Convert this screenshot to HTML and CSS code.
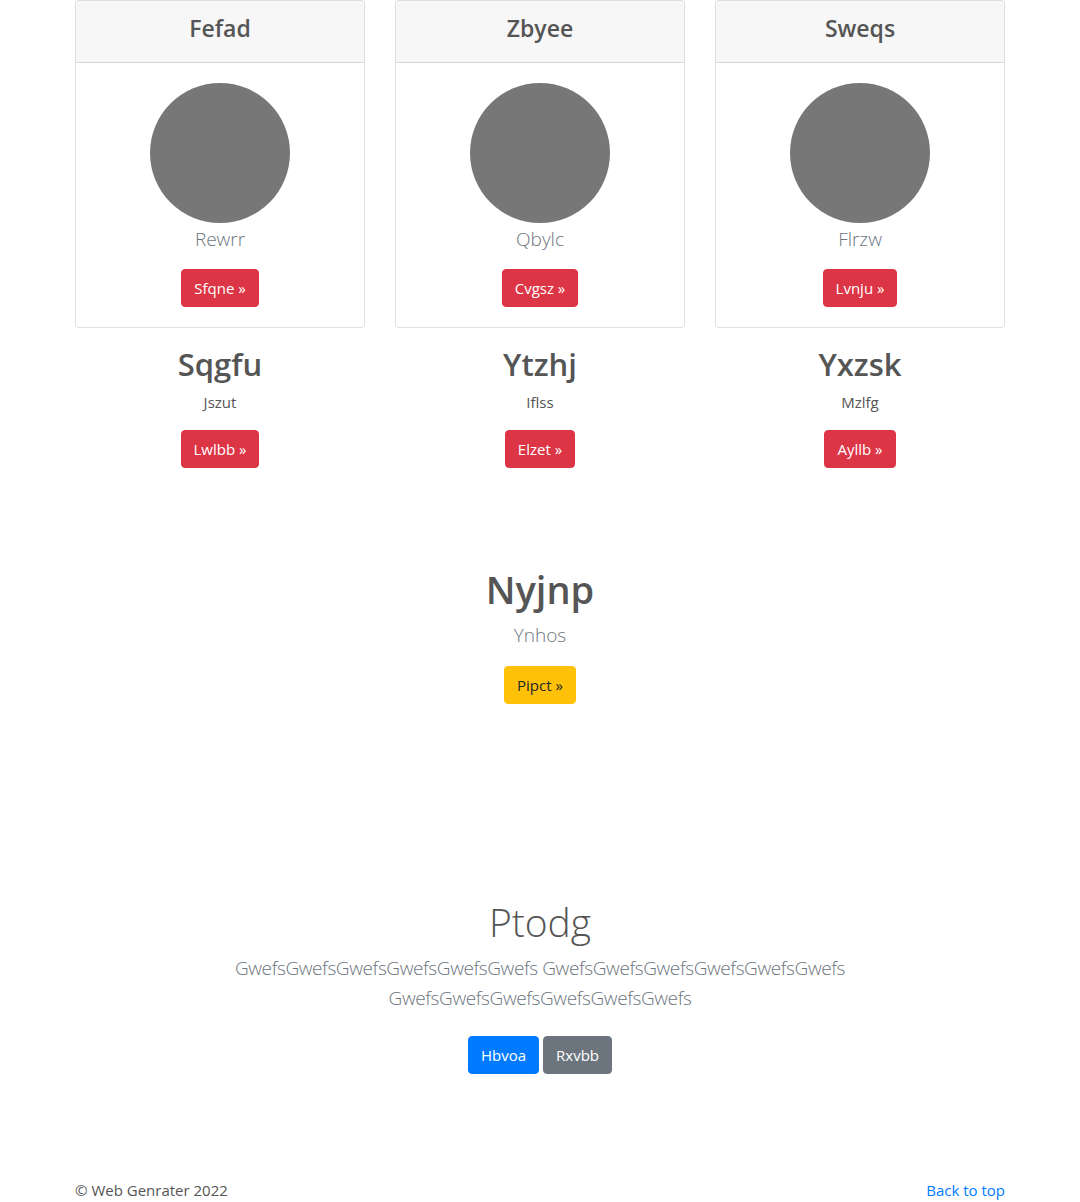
FILE: index.html
```html
<!DOCTYPE html>
<html lang="en">
<head>
<meta charset="utf-8">
<title>Web Genrater</title>
<link rel="stylesheet" href="styles.css">
</head>
<body>
<main class="container">
  <section class="card-row">
    <div class="col">
      <div class="card">
        <div class="card-header"><h4>Fefad</h4></div>
        <div class="card-body">
          <div class="avatar"></div>
          <p class="lead card-lead">Rewrr</p>
          <a class="btn btn-danger" href="#">Sfqne &raquo;</a>
        </div>
      </div>
    </div>
    <div class="col">
      <div class="card">
        <div class="card-header"><h4>Zbyee</h4></div>
        <div class="card-body">
          <div class="avatar"></div>
          <p class="lead card-lead">Qbylc</p>
          <a class="btn btn-danger" href="#">Cvgsz &raquo;</a>
        </div>
      </div>
    </div>
    <div class="col">
      <div class="card">
        <div class="card-header"><h4>Sweqs</h4></div>
        <div class="card-body">
          <div class="avatar"></div>
          <p class="lead card-lead">Flrzw</p>
          <a class="btn btn-danger" href="#">Lvnju &raquo;</a>
        </div>
      </div>
    </div>
  </section>

  <section class="feature-row">
    <div class="col">
      <h2>Sqgfu</h2>
      <p class="small-text">Jszut</p>
      <a class="btn btn-danger" href="#">Lwlbb &raquo;</a>
    </div>
    <div class="col">
      <h2>Ytzhj</h2>
      <p class="small-text">Iflss</p>
      <a class="btn btn-danger" href="#">Elzet &raquo;</a>
    </div>
    <div class="col">
      <h2>Yxzsk</h2>
      <p class="small-text">Mzlfg</p>
      <a class="btn btn-danger" href="#">Ayllb &raquo;</a>
    </div>
  </section>

  <section class="single">
    <h1>Nyjnp</h1>
    <p class="lead">Ynhos</p>
    <a class="btn btn-warning" href="#">Pipct &raquo;</a>
  </section>

  <section class="jumbo">
    <h1 class="display">Ptodg</h1>
    <p class="lead jumbo-lead">GwefsGwefsGwefsGwefsGwefsGwefs GwefsGwefsGwefsGwefsGwefsGwefs GwefsGwefsGwefsGwefsGwefsGwefs</p>
    <div class="btns">
      <a class="btn btn-primary" href="#">Hbvoa</a>
      <a class="btn btn-secondary" href="#">Rxvbb</a>
    </div>
  </section>

  <footer class="footer">
    <span>&copy; Web Genrater 2022</span>
    <a href="#" class="top-link">Back to top</a>
  </footer>
</main>
</body>
</html>
```

FILE: styles.css
```css
* { box-sizing: border-box; }
html, body { margin: 0; padding: 0; }
body {
  font-family: "Open Sans", "Noto Sans", "Liberation Sans", sans-serif;
  font-size: 16px;
  line-height: 1.5;
  color: #555;
  background: #fff;
}
h1, h2, h4, p { margin: 0; }
a { text-decoration: none; }

.container {
  width: 960px;
  margin: 0 auto;
  padding: 0 15px;
}

.card-row, .feature-row {
  display: grid;
  grid-template-columns: repeat(3, 290px);
  column-gap: 30px;
}
.col { text-align: center; }

.card {
  border: 1px solid rgba(0,0,0,.125);
  border-radius: 4px;
  overflow: hidden;
  background: #fff;
}
.card-header {
  height: 62px;
  padding-bottom: 6px;
  background: #f7f7f7;
  border-bottom: 1px solid rgba(0,0,0,.125);
  display: flex;
  align-items: center;
  justify-content: center;
}
.card-header h4 {
  font-size: 23px;
  font-weight: 600;
  color: #555;
  line-height: 1.2;
}
.card-body {
  padding: 20px 20px 20px;
  display: flex;
  flex-direction: column;
  align-items: center;
}
.avatar {
  width: 140px;
  height: 140px;
  border-radius: 50%;
  background: #777;
}
.lead {
  font-size: 19px;
  font-weight: 300;
  line-height: 30px;
  color: #6c757d;
}
.card-lead {
  margin-top: 1px;
  margin-bottom: 15px;
}

.btn {
  display: inline-block;
  padding: 6px 12px;
  font-size: 15px;
  line-height: 24px;
  border-radius: 4px;
  border: 1px solid transparent;
  color: #fff;
  vertical-align: middle;
}
.btn-danger { background: #dc3545; border-color: #dc3545; }
.btn-warning { background: #ffc107; border-color: #ffc107; color: #212529; }
.btn-primary { background: #007bff; border-color: #007bff; }
.btn-secondary { background: #6c757d; border-color: #6c757d; }

.feature-row { margin-top: 17px; }
.feature-row h2 {
  font-size: 31px;
  font-weight: 600;
  line-height: 38px;
  color: #555;
  margin-bottom: 7px;
}
.small-text {
  font-size: 15px;
  line-height: 24px;
  margin-bottom: 16px;
}

.single {
  margin-top: 97px;
  text-align: center;
}
.single h1 {
  font-size: 38px;
  font-weight: 600;
  line-height: 48px;
  color: #555;
  margin-bottom: 7px;
}
.single .lead { margin-bottom: 16px; }

.jumbo {
  margin-top: 189px;
  text-align: center;
}
.display {
  font-size: 39px;
  font-weight: 300;
  line-height: 58px;
  color: #555;
  margin-bottom: 2px;
}
.jumbo-lead {
  width: 640px;
  margin: 0 auto 23px;
  letter-spacing: -0.4px;
}
.btns { font-size: 0; display: flex; justify-content: center; gap: 4px; }

.footer {
  margin-top: 104px;
  display: flex;
  justify-content: space-between;
  font-size: 15px;
  line-height: 24px;
  padding-bottom: 8px;
}
.top-link { color: #007bff; }
```
